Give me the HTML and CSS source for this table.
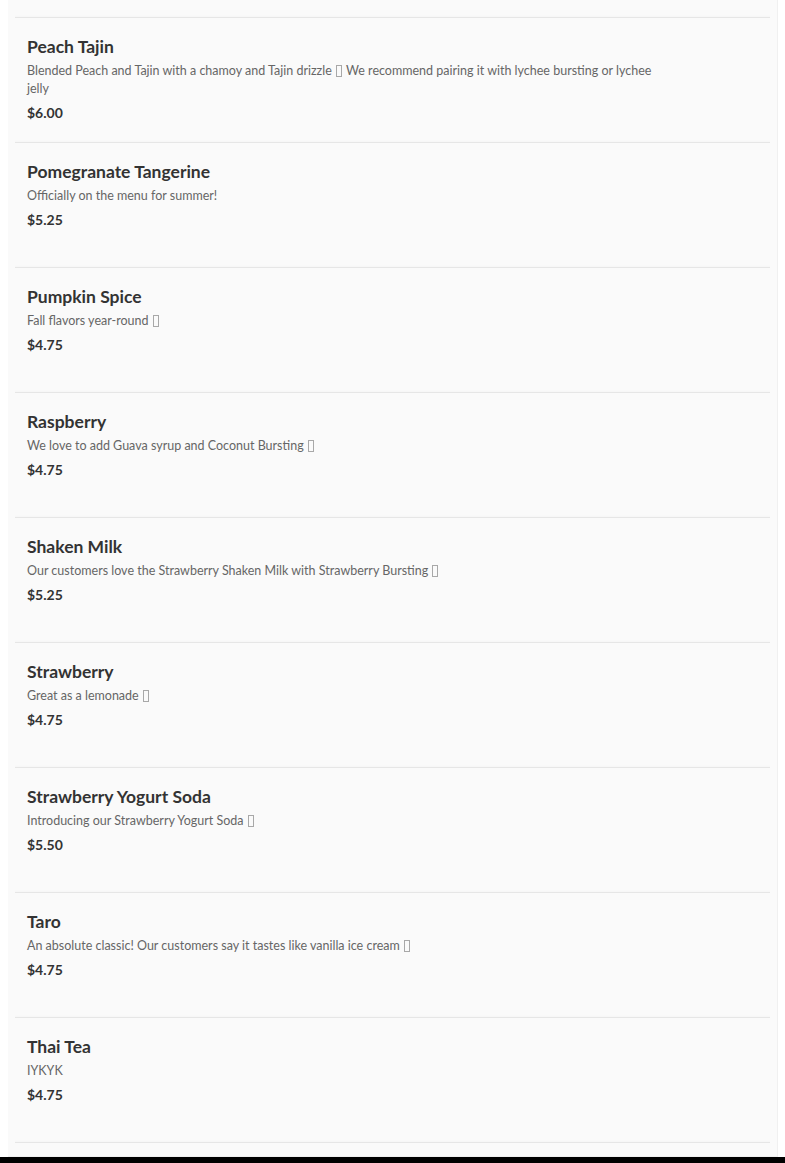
FILE: index.html
```html
<!DOCTYPE html>
<html>
<head>
<meta charset="utf-8">
<link rel="stylesheet" href="styles.css">
</head>
<body>
<div class="menu">
  <div class="item item-partial"></div>
  <div class="item">
    <div class="name">Peach Tajin</div>
    <div class="desc">Blended Peach and Tajin with a chamoy and Tajin drizzle <span class="tofu"></span> We recommend pairing it with lychee bursting or lychee jelly</div>
    <div class="price">$6.00</div>
  </div>
  <div class="item">
    <div class="name">Pomegranate Tangerine</div>
    <div class="desc">Officially on the menu for summer!</div>
    <div class="price">$5.25</div>
  </div>
  <div class="item">
    <div class="name">Pumpkin Spice</div>
    <div class="desc">Fall flavors year-round <span class="tofu"></span></div>
    <div class="price">$4.75</div>
  </div>
  <div class="item">
    <div class="name">Raspberry</div>
    <div class="desc">We love to add Guava syrup and Coconut Bursting <span class="tofu"></span></div>
    <div class="price">$4.75</div>
  </div>
  <div class="item">
    <div class="name">Shaken Milk</div>
    <div class="desc">Our customers love the Strawberry Shaken Milk with Strawberry Bursting <span class="tofu"></span></div>
    <div class="price">$5.25</div>
  </div>
  <div class="item">
    <div class="name">Strawberry</div>
    <div class="desc">Great as a lemonade <span class="tofu"></span></div>
    <div class="price">$4.75</div>
  </div>
  <div class="item">
    <div class="name">Strawberry Yogurt Soda</div>
    <div class="desc">Introducing our Strawberry Yogurt Soda <span class="tofu"></span></div>
    <div class="price">$5.50</div>
  </div>
  <div class="item">
    <div class="name">Taro</div>
    <div class="desc">An absolute classic! Our customers say it tastes like vanilla ice cream <span class="tofu"></span></div>
    <div class="price">$4.75</div>
  </div>
  <div class="item">
    <div class="name">Thai Tea</div>
    <div class="desc">IYKYK</div>
    <div class="price">$4.75</div>
  </div>
</div>
<div class="footer-bar"></div>
</body>
</html>
```
FILE: styles.css
```css
html, body {
  margin: 0;
  padding: 0;
  background: #ffffff;
}
body {
  font-family: "Lato", "Liberation Sans", sans-serif;
  color: #333333;
  height: 1163px;
  overflow: hidden;
}
.menu {
  margin: 0 7px 0 8px;
  padding: 0 7px 13px 7px;
  background: #fafafa;
  border-right: 1px solid #f0f0f0;
  border-bottom: 1px solid #f0f0f0;
}
.item {
  height: 125px;
  box-sizing: border-box;
  padding: 18px 12px 0 12px;
  border-bottom: 1px solid #e6e6e6;
  box-shadow: 0 -5px 3px -4px rgba(0,0,0,0.02) inset;
}
.item-partial {
  height: 18px;
  padding: 0;
}
.name {
  font-size: 17.5px;
  line-height: 22px;
  font-weight: 700;
  color: #333333;
}
.desc {
  margin-top: 4px;
  font-size: 12.5px;
  line-height: 18px;
  color: #666666;
  max-width: 645px;
}
.tofu {
  display: inline-block;
  width: 4px;
  height: 10px;
  border: 1px solid #a8a8a8;
  vertical-align: -2px;
  margin: 0 1px;
}
.price {
  margin-top: 5px;
  font-size: 14px;
  line-height: 20px;
  font-weight: 700;
  color: #333333;
}
.footer-bar {
  height: 10px;
  background: #000000;
}
```
